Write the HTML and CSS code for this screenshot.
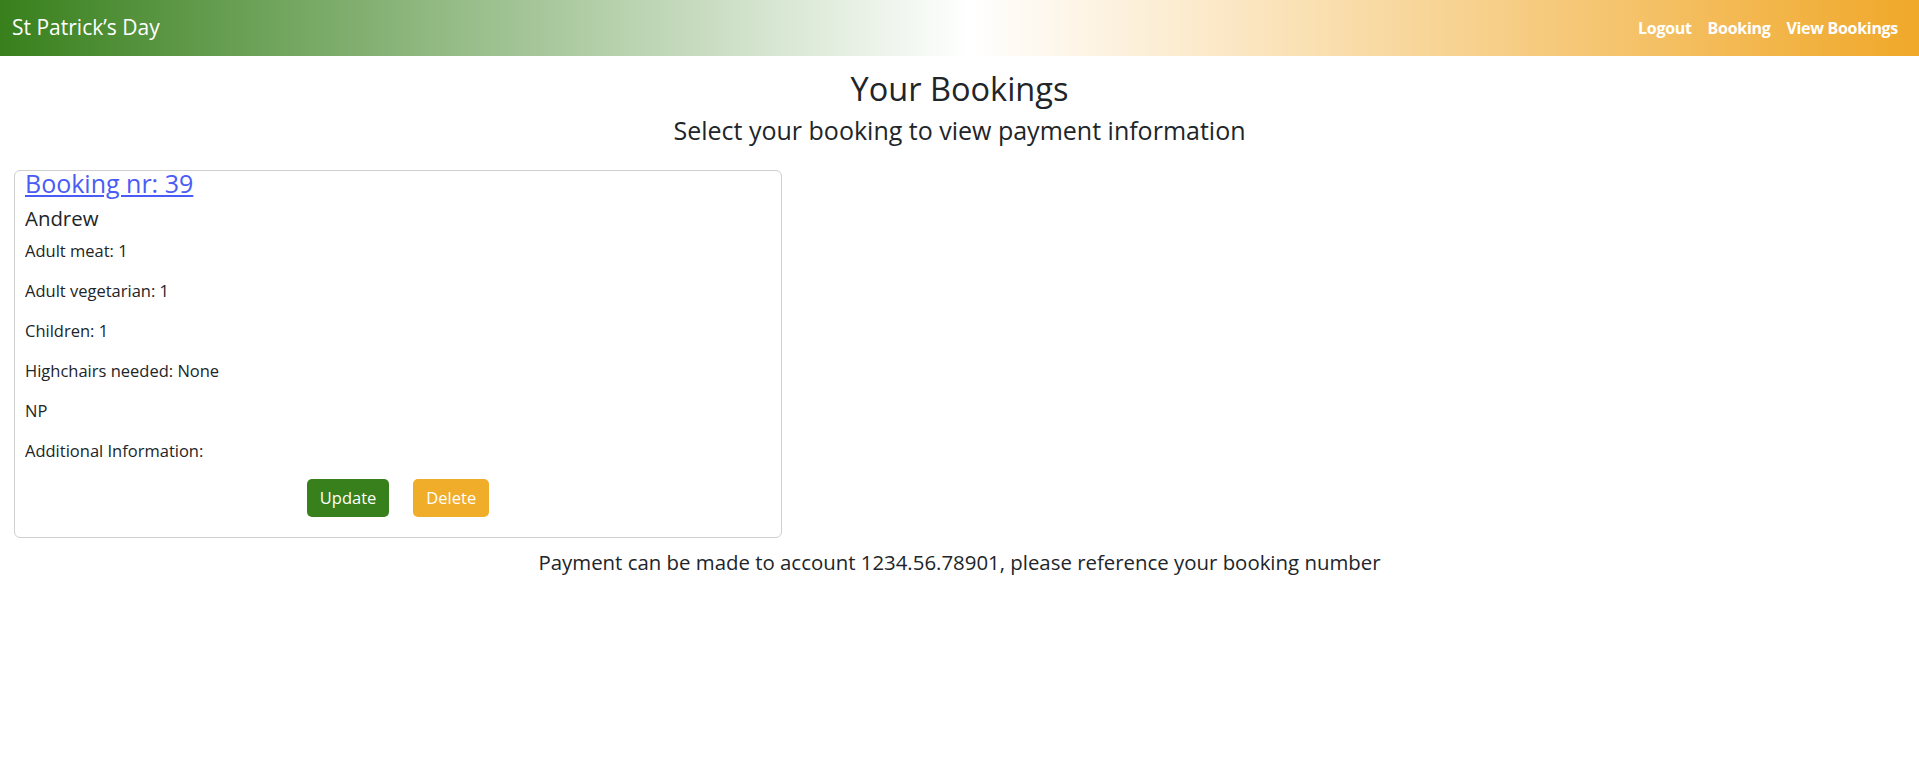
FILE: index.html
```html
<!DOCTYPE html>
<html lang="en">
<head>
<meta charset="utf-8">
<title>Your Bookings</title>
<link rel="stylesheet" href="styles.css">
</head>
<body>
<header class="topbar">
  <a class="brand" href="#">St Patrick’s Day</a>
  <nav class="nav">
    <a href="#">Logout</a>
    <a href="#">Booking</a>
    <a href="#">View Bookings</a>
  </nav>
</header>
<main class="page">
  <h2 class="title">Your Bookings</h2>
  <h4 class="subtitle">Select your booking to view payment information</h4>
  <div class="row">
    <div class="card">
      <a class="card-link" href="#">Booking nr: 39</a>
      <h5 class="name">Andrew</h5>
      <p>Adult meat: 1</p>
      <p>Adult vegetarian: 1</p>
      <p>Children: 1</p>
      <p>Highchairs needed: None</p>
      <p>NP</p>
      <p>Additional Information:</p>
      <div class="actions">
        <a class="btn btn-green" href="#">Update</a>
        <a class="btn btn-orange" href="#">Delete</a>
      </div>
    </div>
  </div>
  <p class="payment">Payment can be made to account 1234.56.78901, please reference your booking number</p>
</main>
</body>
</html>
```
FILE: styles.css
```css
* { box-sizing: border-box; }
body {
  margin: 0;
  font-family: "Open Sans", Lato, sans-serif;
  color: #212529;
  font-size: 16.5px;
  line-height: 1.5;
  background: #fff;
}
.topbar {
  height: 56px;
  display: flex;
  align-items: center;
  justify-content: space-between;
  padding: 0 13px 0 12px;
  background: linear-gradient(to right, #38801c 0%, #ffffff 50.5%, #f0a829 100%);
}
.brand {
  color: #fff;
  font-size: 21px;
  text-decoration: none;
}
.nav { display: flex; }
.nav a {
  color: #fff;
  font-weight: 700;
  text-decoration: none;
  padding: 0 8px;
  font-size: 16px;
  letter-spacing: -0.3px;
}
.page { padding: 0 12px; }
.title {
  margin: 13px 0 0;
  text-align: center;
  font-weight: 400;
  font-size: 32.5px;
  line-height: 1.2;
}
.subtitle {
  margin: 7px 0 0;
  text-align: center;
  font-weight: 400;
  font-size: 25px;
  line-height: 1.2;
}
.row {
  display: flex;
  margin-top: 25px;
  padding-left: 2px;
}
.card {
  width: 768px;
  border: 1px solid #cfcfcf;
  border-radius: 6px;
  padding: 0 10px 20px;
}
.card-link {
  display: block;
  color: #4a5cf5;
  text-decoration: underline;
  font-size: 25px;
  line-height: 25px;
}
.name {
  margin: 10px 0 9px;
  font-weight: 400;
  font-size: 20.4px;
  line-height: 1.2;
}
.card p { margin: 0 0 16px; line-height: 24px; }
.actions {
  display: flex;
  justify-content: center;
  gap: 24px;
  margin-top: 3px;
}
.btn {
  display: inline-block;
  color: #fff;
  text-decoration: none;
  padding: 6px 13px;
  border-radius: 5px;
  line-height: 26px;
}
.btn-green { background: #38801c; }
.btn-orange { background: #f0ad2a; }
.payment {
  text-align: center;
  font-size: 20.4px;
  margin: 9px 0 0;
}
```
